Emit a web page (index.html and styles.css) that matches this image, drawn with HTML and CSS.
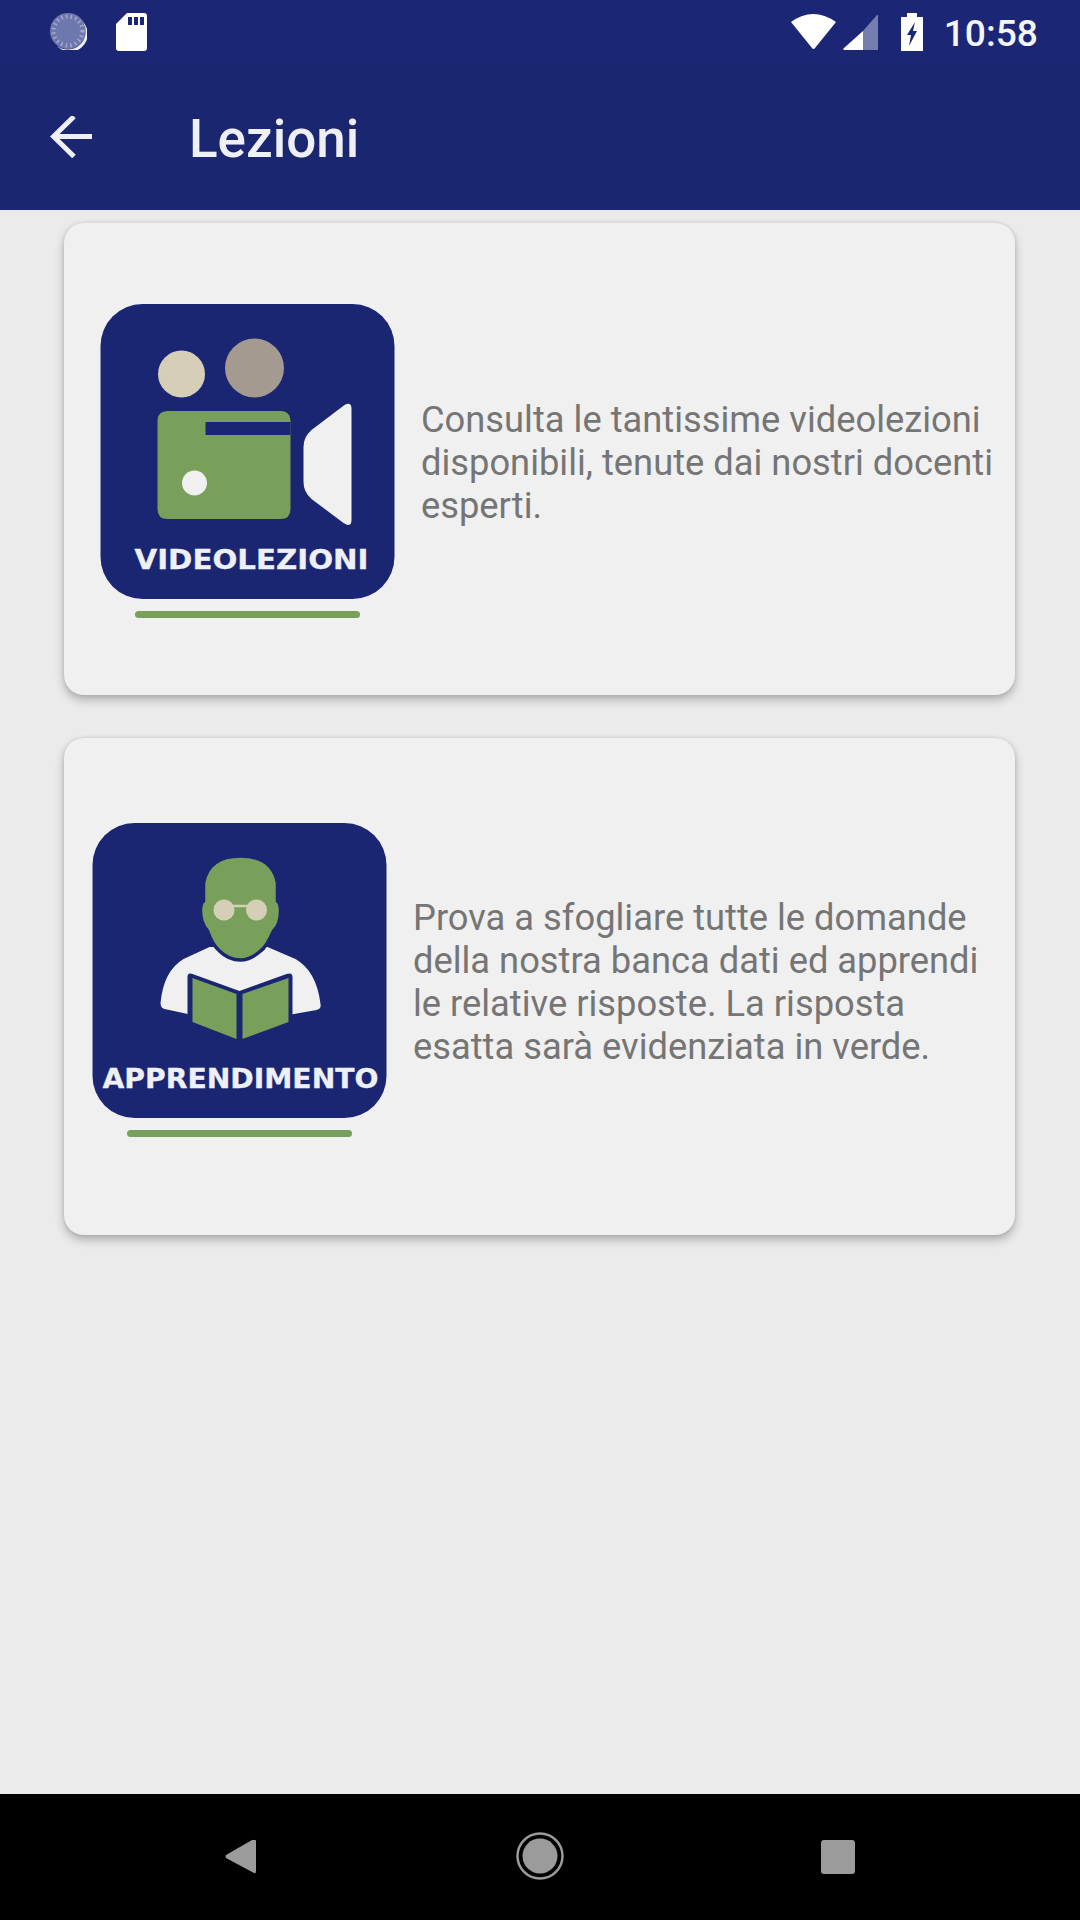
FILE: index.html
```html
<!DOCTYPE html>
<html lang="en">
<head>
    <meta charset="UTF-8">
    <meta name="viewport" content="width=device-width, initial-scale=1.0">
    <title>Lezioni</title>
    <link rel="stylesheet" href="styles.css">
</head>
<body>

<div class="statusBar">
    <div class="statusLeft">
        <svg class="dialIcon" viewBox="0 0 37 37">
            <circle cx="18" cy="18" r="18" fill="#6f78ae"/>
            <circle cx="18" cy="18" r="14.5" fill="none" stroke="#a5abcd" stroke-width="4" stroke-dasharray="1.5 3.2"/>
            <path d="M33 9 A18 18 0 0 1 7 33 A17 17 0 0 0 33 9 Z" fill="#f0f1f6"/>
        </svg>
        <svg class="sdIcon" viewBox="0 0 31 38">
            <path d="M11 0 H28 Q31 0 31 3 V35 Q31 38 28 38 H3 Q0 38 0 35 V11 Z" fill="#fff"/>
            <path d="M12 4 h4 v8 h-4 z M18 4 h4 v8 h-4 z M24 4 h4 v8 h-4 z" fill="#1b2775"/>
        </svg>
    </div>
    <div class="statusRight">
        <svg class="wifiIcon" viewBox="0 0 45 36">
            <path d="M0 8 Q22 -8 45 8 L24 34 Q22.500 36 21 34 Z" fill="#fff"/>
        </svg>
        <svg class="signalIcon" viewBox="0 0 35 36">
            <path d="M20 17 V36 H2 Q-1 36 1 34 Z" fill="#fff"/>
            <path d="M20 17 L34 1 Q35 0 35 2 V36 H20 Z" fill="#767eb0"/>
        </svg>
        <svg class="batteryIcon" viewBox="0 0 22 38">
            <path d="M6 0 H16 V4 H22 V38 H0 V4 H6 Z" fill="#fff"/>
            <path d="M14 9 L6 22 H10 L8 33 L16 18 H12 Z" fill="#1b2775"/>
        </svg>
        <span class="clock">10:58</span>
    </div>
</div>

<div class="appBar">
    <svg class="backArrow" viewBox="0 0 42 42">
        <path d="M42 20.500 H4 M24 0.500 L3.500 20.500 L24 40.500" fill="none" stroke="#eef0f6" stroke-width="5"/>
    </svg>
    <h1 class="appTitle">Lezioni</h1>
</div>

<div class="content">
    <div class="card videoCard">
        <div class="tileBox">
            <svg class="tile" viewBox="0 0 294 295">
                <rect width="294" height="295" rx="42" fill="#1a2672"/>
                <circle cx="81" cy="70" r="23.500" fill="#d6cfb8"/>
                <circle cx="154" cy="64" r="29.500" fill="#a49a90"/>
                <path d="M67 107 H180 Q190 107 190 118 V205 Q190 215 180 215 H67 Q57 215 57 205 V117 Q57 107 67 107 Z" fill="#78a05a"/>
                <rect x="105" y="118" width="85" height="13" fill="#1a2672"/>
                <circle cx="94" cy="179" r="12.500" fill="#f0f0f0"/>
                <path d="M251 105 Q251 97 244 101 L211 126 Q203 133 203 143 V178 Q203 188 211 195 L243 219 Q251 224 251 216 Z" fill="#f0f0f0"/>
                <text class="tileLabel" x="34" y="265" textLength="234" lengthAdjust="spacingAndGlyphs">VIDEOLEZIONI</text>
            </svg>
            <div class="tileBar"></div>
        </div>
        <p class="cardText">Consulta le tantissime videolezioni disponibili, tenute dai nostri docenti esperti.</p>
    </div>

    <div class="card studyCard">
        <div class="tileBox">
            <svg class="tile" viewBox="0 0 294 295">
                <rect width="294" height="295" rx="42" fill="#1a2672"/>
                <!-- shoulders -->
                <path d="M117 124 L91 136 Q71 148 68 180 Q68 185 72 186 L100 192 H196 L224 187 Q229 186 228 181 Q224 148 203 136 L175 124 Z" fill="#f0f0f0"/>
                <!-- head -->
                <path d="M148 33 Q180 33 185 60 L185 78 Q188 80 188 88 Q188 102 181 108 Q174 124 168 128 Q158 137 148 137 Q136 137 127 128 Q120 122 115 108 Q108 100 108 88 Q108 80 111 78 L111 60 Q116 33 148 33 Z" fill="#78a05a" stroke="#1a2672" stroke-width="3.500"/>
                <path d="M131 83 H164" stroke="#d6cfb8" stroke-width="2.500"/>
                <circle cx="131.500" cy="87" r="10.500" fill="#d6cfb8"/>
                <circle cx="164" cy="87" r="10.500" fill="#d6cfb8"/>
                <!-- book -->
                <path d="M95 154 Q95 149 100 151 L147 168 L194 151 Q200 149 200 154 V203 L147 222 L95 203 Z" fill="#1a2672"/>
                <path d="M100 155 L144 171 V216 L100 199 Z" fill="#78a05a"/>
                <path d="M150 171 L196 155 V199 L150 216 Z" fill="#78a05a"/>
                <text class="tileLabel" x="10" y="265" textLength="276" lengthAdjust="spacingAndGlyphs">APPRENDIMENTO</text>
            </svg>
            <div class="tileBar"></div>
        </div>
        <p class="cardText">Prova a sfogliare tutte le domande della nostra banca dati ed apprendi le relative risposte. La risposta esatta sarà evidenziata in verde.</p>
    </div>
</div>

<div class="navBar">
    <svg class="navBack" viewBox="0 0 31 35">
        <path d="M30 1 Q31 0 31 3 V32 Q31 35 29 34 L1 19 Q0 17.500 1 16 L27 1 Z" fill="#9b9b9b"/>
    </svg>
    <svg class="navHome" viewBox="0 0 48 48">
        <circle cx="24" cy="24" r="22.500" fill="none" stroke="#9b9b9b" stroke-width="2.500"/>
        <circle cx="24" cy="24" r="17.500" fill="#9b9b9b"/>
    </svg>
    <div class="navSquare"></div>
</div>

</body>
</html>
```

FILE: styles.css
```css
body {
    font-family: Roboto, sans-serif;
    background-color: #ebebeb;
    margin: 0;
    width: 1080px;
    height: 1920px;
    display: flex;
    flex-direction: column;
    overflow: hidden;
}

svg {
    display: block;
    flex: none;
}

/* Status bar */
.statusBar {
    height: 63px;
    background-color: #1b2775;
    display: flex;
    justify-content: space-between;
    align-items: center;
    padding: 0 42px 0 50px;
    flex: none;
}

.statusLeft {
    display: flex;
    align-items: center;
    gap: 29px;
}

.statusRight {
    display: flex;
    align-items: center;
}

.dialIcon {
    width: 37px;
    height: 37px;
}

.sdIcon {
    width: 31px;
    height: 38px;
}

.wifiIcon {
    width: 45px;
    height: 36px;
    margin-right: 7px;
}

.signalIcon {
    width: 35px;
    height: 36px;
    margin-right: 23px;
}

.batteryIcon {
    width: 22px;
    height: 38px;
    margin-right: 21px;
}

.clock {
    font-size: 37.2px;
    font-weight: 500;
    color: #f4f5f9;
    padding-top: 3px;
}

/* App bar */
.appBar {
    height: 147px;
    background-color: #1a2670;
    display: flex;
    align-items: center;
    padding-left: 50px;
    flex: none;
}

.backArrow {
    width: 42px;
    height: 42px;
    margin-right: 97px;
}

.appTitle {
    margin: 0;
    padding-top: 4px;
    font-size: 53px;
    font-weight: 500;
    color: #eef0f6;
}

/* Cards */
.content {
    flex: 1;
    padding: 13px 65px 0 64px;
    display: flex;
    flex-direction: column;
    gap: 43px;
}

.card {
    background-color: #f0f0f0;
    border-radius: 20px;
    box-shadow: 0 5px 10px rgba(0, 0, 0, 0.25), 0 0 4px rgba(0, 0, 0, 0.1);
    display: flex;
    align-items: center;
    gap: 26px;
}

.videoCard {
    padding: 81px 10px 77px 36px;
}

.studyCard {
    padding: 85px 10px 98px 28px;
}

.tileBox {
    display: flex;
    flex-direction: column;
    align-items: center;
    gap: 12px;
    flex: none;
}

.tile {
    width: 295px;
    height: 295px;
}

.tileLabel {
    font-family: "DejaVu Sans", sans-serif;
    font-size: 26.5px;
    font-weight: 700;
    fill: #eef0f6;
    stroke: #eef0f6;
    stroke-width: 0.3px;
}

.tileBar {
    width: 225px;
    height: 7px;
    border-radius: 4px;
    background-color: #78a05a;
}

.cardText {
    margin: 0;
    padding-top: 3px;
    font-size: 36.3px;
    line-height: 43px;
    color: #757575;
}

/* Navigation bar */
.navBar {
    height: 126px;
    background-color: #000;
    position: relative;
    flex: none;
}

.navBack {
    position: absolute;
    left: 225px;
    top: 45px;
    width: 31px;
    height: 35px;
}

.navHome {
    position: absolute;
    left: 516px;
    top: 38px;
    width: 48px;
    height: 48px;
}

.navSquare {
    position: absolute;
    left: 821px;
    top: 46px;
    width: 34px;
    height: 34px;
    border-radius: 3px;
    background-color: #9b9b9b;
}
```
